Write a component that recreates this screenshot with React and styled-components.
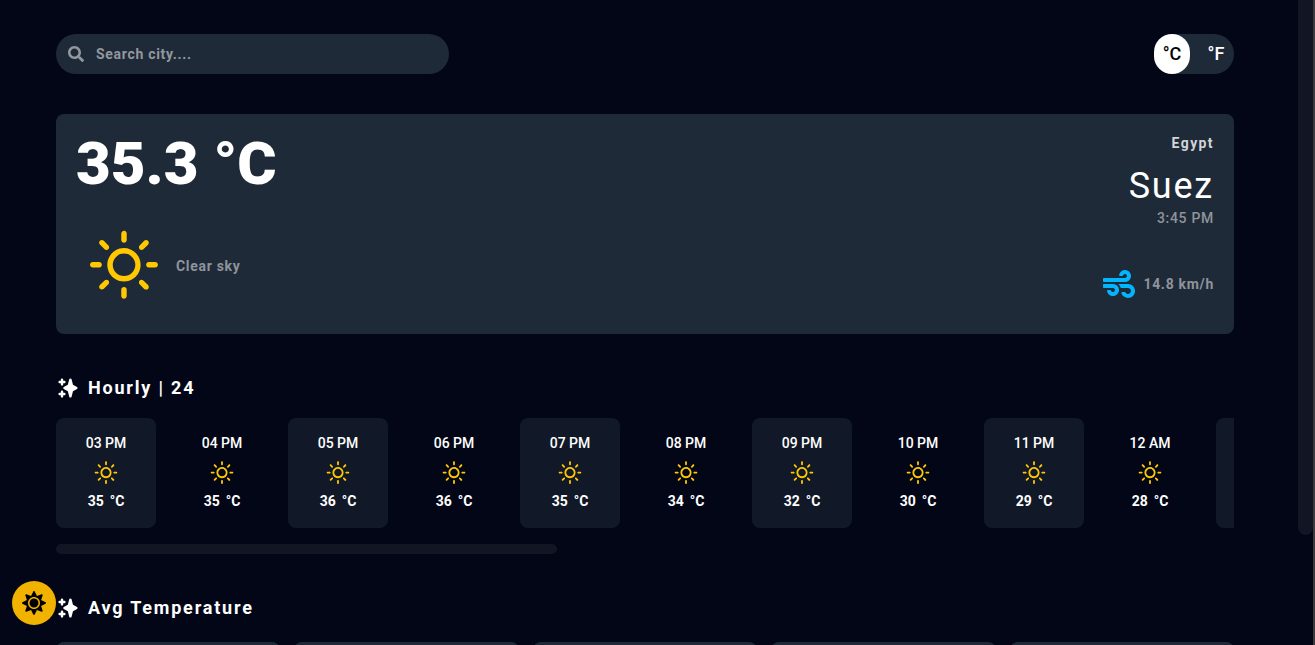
import React, { useState } from "react";
import styled, { createGlobalStyle } from "styled-components";
import { FaSearch, FaWind, FaSun } from "react-icons/fa";
import { WiDaySunny } from "react-icons/wi";
import { HiSparkles } from "react-icons/hi";

const GlobalStyle = createGlobalStyle`
  * { box-sizing: border-box; }
  body {
    margin: 0;
    background: #020617;
    color: #fff;
    font-family: Roboto, "Liberation Sans", sans-serif;
    font-size: 14px;
    line-height: 20px;
  }
  h1, h2, p { margin: 0; }
  svg { display: block; flex: none; }
`;

const Viewport = styled.div`
  display: flex;
  height: 100vh;
  overflow: hidden;
  border-right: 2px solid #3b3b3f;
`;

const Page = styled.main`
  flex: 1;
  min-width: 0;
  padding: 34px 64px 0 56px;
`;

const PageScrollTrack = styled.div`
  width: 15px;
`;

const PageScrollThumb = styled.div`
  height: 83vh;
  border-radius: 0 0 8px 8px;
  background: #111524;
`;

const TopBar = styled.header`
  display: flex;
  justify-content: space-between;
  align-items: center;
  margin-bottom: 40px;
`;

const SearchField = styled.label`
  display: flex;
  align-items: center;
  gap: 12px;
  width: 33.4%;
  height: 40px;
  padding: 0 12px;
  border-radius: 20px;
  background: #1f2a39;
  color: #93979e;
`;

const SearchInput = styled.input`
  flex: 1;
  min-width: 0;
  padding: 0;
  border: 0;
  outline: 0;
  background: transparent;
  color: #fff;
  font: 700 14px/20px Roboto, sans-serif;
  letter-spacing: 0.05em;
  &::placeholder { color: #93979e; opacity: 1; }
`;

const UnitSwitch = styled.div`
  display: flex;
  justify-content: space-between;
  width: 80px;
  height: 40px;
  border-radius: 20px;
  background: #1f2a39;
`;

const UnitButton = styled.button`
  width: 36px;
  height: 40px;
  padding: 0;
  border: 0;
  border-radius: 20px;
  background: ${(p) => (p.$active ? "#fff" : "transparent")};
  color: ${(p) => (p.$active ? "#000" : "#fff")};
  font: 500 18px/28px Roboto, sans-serif;
  cursor: pointer;
`;

const CurrentCard = styled.section`
  display: flex;
  justify-content: space-between;
  height: 220px;
  padding: 20px;
  border-radius: 8px;
  background: #1f2a39;
`;

const CurrentLeft = styled.div`
  display: flex;
  flex-direction: column;
  gap: 24px;
`;

const Temperature = styled.h1`
  font-size: 60px;
  line-height: 60px;
  font-weight: 900;
`;

const Condition = styled.div`
  display: flex;
  align-items: center;
  gap: 4px;
  color: #8f939b;
  font-weight: 700;
  letter-spacing: 0.05em;
  svg { color: #ffc800; }
`;

const CurrentRight = styled.div`
  display: flex;
  flex-direction: column;
  align-items: flex-end;
  letter-spacing: 0.05em;
`;

const Country = styled.p`
  color: #d2d4d7;
  font-weight: 700;
  line-height: 18px;
  letter-spacing: 0.1em;
`;

const City = styled.h2`
  margin: 14px 0 2px;
  font-size: 36px;
  line-height: 40px;
  font-weight: 400;
  letter-spacing: 0.05em;
`;

const LocalTime = styled.p`
  color: #8f939b;
  font-weight: 500;
`;

const Wind = styled.p`
  display: flex;
  align-items: center;
  gap: 8px;
  margin-top: 40px;
  color: #8f939b;
  font-weight: 700;
  svg { color: #00b7ff; }
`;

const SectionTitle = styled.h2`
  display: flex;
  align-items: center;
  gap: 8px;
  margin: 40px 0 16px;
  font-size: 18px;
  line-height: 28px;
  font-weight: 700;
  letter-spacing: 0.1em;
`;

const HourList = styled.div`
  display: flex;
  gap: 16px;
  overflow: hidden;
`;

const HourCard = styled.article`
  display: flex;
  flex: none;
  flex-direction: column;
  align-items: center;
  gap: 4px;
  width: 100px;
  height: 110px;
  padding-top: 15px;
  border-radius: 8px;
  background: ${(p) => (p.$shaded ? "#111827" : "transparent")};
`;

const HourLabel = styled.p`
  font-weight: 500;
`;

const HourTemp = styled.p`
  display: flex;
  gap: 6px;
  line-height: 16px;
  font-weight: 700;
`;

const HourIcon = styled(WiDaySunny)`
  color: #ffc800;
`;

const HourScrollThumb = styled.div`
  width: 42.5%;
  height: 10px;
  margin-top: 16px;
  border-radius: 5px;
  background: #111524;
`;

const AverageGrid = styled.div`
  display: grid;
  grid-template-columns: repeat(5, 1fr);
  gap: 14px;
  margin-top: 20px;
`;

const AverageCard = styled.div`
  height: 120px;
  border-radius: 8px;
  background: #1f2a39;
`;

const ThemeButton = styled.button`
  position: fixed;
  left: 12px;
  bottom: 20px;
  display: grid;
  place-items: center;
  width: 44px;
  height: 44px;
  padding: 0;
  border: 0;
  border-radius: 50%;
  background: #f2b200;
  color: #000;
  cursor: pointer;
`;

const HOURS = [
  ["03 PM", 35], ["04 PM", 35], ["05 PM", 36], ["06 PM", 36],
  ["07 PM", 35], ["08 PM", 34], ["09 PM", 32], ["10 PM", 30],
  ["11 PM", 29], ["12 AM", 28], ["", null],
];

export default function App() {
  const [unit, setUnit] = useState("C");
  const convert = (c) => (unit === "C" ? c : (c * 9) / 5 + 32);

  return (
    <>
      <GlobalStyle />
      <Viewport>
        <Page>
          <TopBar>
            <SearchField>
              <FaSearch size={16} />
              <SearchInput type="text" placeholder="Search city...." aria-label="Search city" />
            </SearchField>
            <UnitSwitch>
              {["C", "F"].map((u) => (
                <UnitButton key={u} type="button" $active={unit === u} onClick={() => setUnit(u)}>
                  °{u}
                </UnitButton>
              ))}
            </UnitSwitch>
          </TopBar>

          <CurrentCard>
            <CurrentLeft>
              <Temperature>{convert(35.3).toFixed(1)} °{unit}</Temperature>
              <Condition>
                <WiDaySunny size={96} />
                <span>Clear sky</span>
              </Condition>
            </CurrentLeft>
            <CurrentRight>
              <Country>Egypt</Country>
              <City>Suez</City>
              <LocalTime>3:45 PM</LocalTime>
              <Wind>
                <FaWind size={32} />
                <span>14.8 km/h</span>
              </Wind>
            </CurrentRight>
          </CurrentCard>

          <SectionTitle>
            <HiSparkles size={24} />
            <span>Hourly | 24</span>
          </SectionTitle>
          <HourList>
            {HOURS.map(([label, temp], i) => (
              <HourCard key={i} $shaded={i % 2 === 0}>
                {label && (
                  <>
                    <HourLabel>{label}</HourLabel>
                    <HourIcon size={32} />
                    <HourTemp>
                      <span>{Math.round(convert(temp))}</span>
                      <span>°{unit}</span>
                    </HourTemp>
                  </>
                )}
              </HourCard>
            ))}
          </HourList>
          <HourScrollThumb />

          <SectionTitle>
            <HiSparkles size={24} />
            <span>Avg Temperature</span>
          </SectionTitle>
          <AverageGrid>
            {[0, 1, 2, 3, 4].map((i) => (
              <AverageCard key={i} />
            ))}
          </AverageGrid>
        </Page>
        <PageScrollTrack>
          <PageScrollThumb />
        </PageScrollTrack>
      </Viewport>
      <ThemeButton type="button" aria-label="Toggle theme">
        <FaSun size={24} />
      </ThemeButton>
    </>
  );
}
